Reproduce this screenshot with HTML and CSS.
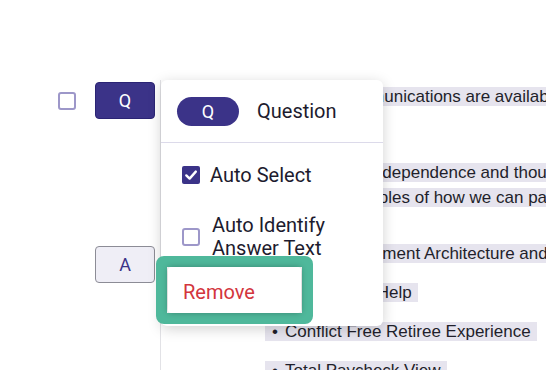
FILE: index.html
```html
<!DOCTYPE html>
<html lang="en">
<head>
    <meta charset="UTF-8">
    <meta name="viewport" content="width=device-width, initial-scale=1.0">
    <title>Tag Editor</title>
    <link rel="stylesheet" href="styles.css">
</head>
<body>

<div class="page">
    <div class="gutter">
        <div class="tag-row first">
            <span class="box"></span>
            <button class="tag tag-q">Q</button>
        </div>
        <div class="tag-row second">
            <button class="tag tag-a">A</button>
        </div>
    </div>

    <div class="doc">
        <p><span class="hl">Plan and participant communications are available online and in print for every retiree</span></p>
        <p class="gap">
            <span class="hl">We encourage financial independence and thoughtful planning for the future</span><br>
            <span class="hl">Provided below are examples of how we can partner with you and your team</span>
        </p>
        <ul class="items">
            <li><span class="hl item">Digital Retirement Architecture and Design</span></li>
            <li><span class="hl item">Retiree Job Help</span></li>
            <li><span class="hl item">Conflict Free Retiree Experience</span></li>
            <li><span class="hl item">Total Paycheck View</span></li>
        </ul>
    </div>

    <div class="menu">
        <div class="menu-head">
            <span class="pill">Q</span>
            <span class="menu-title">Question</span>
        </div>
        <div class="menu-body">
            <label class="option">
                <svg class="check" width="18" height="18" viewBox="0 0 18 18">
                    <rect x="0" y="0" width="18" height="18" rx="2" fill="#3b3388"/>
                    <path d="M4.3 9.4 L7.6 12.6 L13.8 5.6" fill="none" stroke="#fff" stroke-width="2.4" stroke-linecap="round" stroke-linejoin="round"/>
                </svg>
                <span>Auto Select</span>
            </label>
            <label class="option two-line">
                <span class="box"></span>
                <span class="option-text">Auto Identify<br>Answer Text</span>
            </label>
        </div>
        <div class="focus-ring">
            <button class="remove">Remove</button>
        </div>
    </div>
</div>

</body>
</html>
```

FILE: styles.css
```css
/* Base */
body {
    margin: 0;
    background: #fff;
    font-family: 'Liberation Sans', Arial, sans-serif;
    overflow: hidden;
}
.page {
    position: relative;
    display: flex;
    width: 546px;
    height: 370px;
    overflow: hidden;
}

/* Left gutter with tag buttons */
.gutter {
    width: 160px;
    flex-shrink: 0;
    padding-left: 58px;
    box-sizing: border-box;
}
.tag-row {
    display: flex;
    align-items: center;
    gap: 19px;
}
.tag-row.first {
    margin-top: 82px;
}
.tag-row.second {
    margin-top: 127px;
    padding-left: 37px;
}
.box {
    display: inline-block;
    width: 18px;
    height: 18px;
    border: 2px solid #9d97c9;
    border-radius: 3px;
    box-sizing: border-box;
    background: #fff;
    flex-shrink: 0;
}
.tag {
    width: 60px;
    height: 37px;
    border-radius: 4px;
    font-family: Roboto, sans-serif;
    font-size: 18px;
    padding: 0;
}
.tag-q {
    background: #3b3388;
    border: 1px solid #2b2474;
    color: #fff;
}
.tag-a {
    background: #efeef6;
    border: 1px solid #8c8c96;
    color: #3b3388;
}

/* Document text */
.doc {
    flex: 1;
    margin-top: 80px;
    padding: 4px 0 0 22px;
    border-left: 1px solid #e2e2e6;
    font-size: 17px;
    line-height: 25px;
    color: #1f1f2b;
    white-space: nowrap;
}
.doc p {
    margin: 0;
}
.doc p.gap {
    margin-top: 51px;
    padding-left: 4px;
}
.hl {
    background: #e6e4ee;
}
.items {
    list-style: none;
    margin: 30.5px 0 0;
    padding-left: 82px;
}
.items li {
    margin-bottom: 14px;
}
.hl.item {
    padding: 0 6px 0 7px;
}
.hl.item::before {
    content: "\2022";
    display: inline-block;
    width: 13px;
}

/* Popup menu */
.menu {
    position: absolute;
    left: 161px;
    top: 80px;
    width: 222px;
    height: 246px;
    background: #fff;
    border-radius: 6px;
    box-shadow: 0 3px 14px rgba(0, 0, 0, 0.18);
    font-family: Roboto, sans-serif;
    color: #1d1b2e;
}
.menu-head {
    height: 62px;
    display: flex;
    align-items: center;
    gap: 18px;
    padding-left: 16px;
    border-bottom: 1px solid #dcdaea;
}
.pill {
    width: 62px;
    height: 29px;
    border-radius: 15px;
    background: #3b3388;
    color: #fff;
    font-size: 18px;
    display: flex;
    align-items: center;
    justify-content: center;
}
.menu-title {
    font-size: 20px;
}
.menu-body {
    padding: 20px 0 0 21px;
}
.option {
    display: flex;
    align-items: center;
    gap: 10px;
    font-size: 20px;
    line-height: 24px;
}
.option.two-line {
    margin-top: 27px;
    gap: 12px;
    line-height: 23px;
}

/* Highlighted menu item */
.focus-ring {
    position: absolute;
    left: -5px;
    top: 176px;
    width: 157px;
    height: 68px;
    box-sizing: border-box;
    border: 11px solid #4fb89b;
    border-radius: 8px;
    padding: 0 1px;
}
.remove {
    width: 100%;
    height: 100%;
    border: none;
    border-radius: 3px;
    background: #fff;
    box-shadow: 0 0 6px rgba(0, 0, 0, 0.28);
    text-align: left;
    padding: 3px 0 0 15px;
    font-family: Roboto, sans-serif;
    font-size: 20px;
    color: #d3353d;
}
```
